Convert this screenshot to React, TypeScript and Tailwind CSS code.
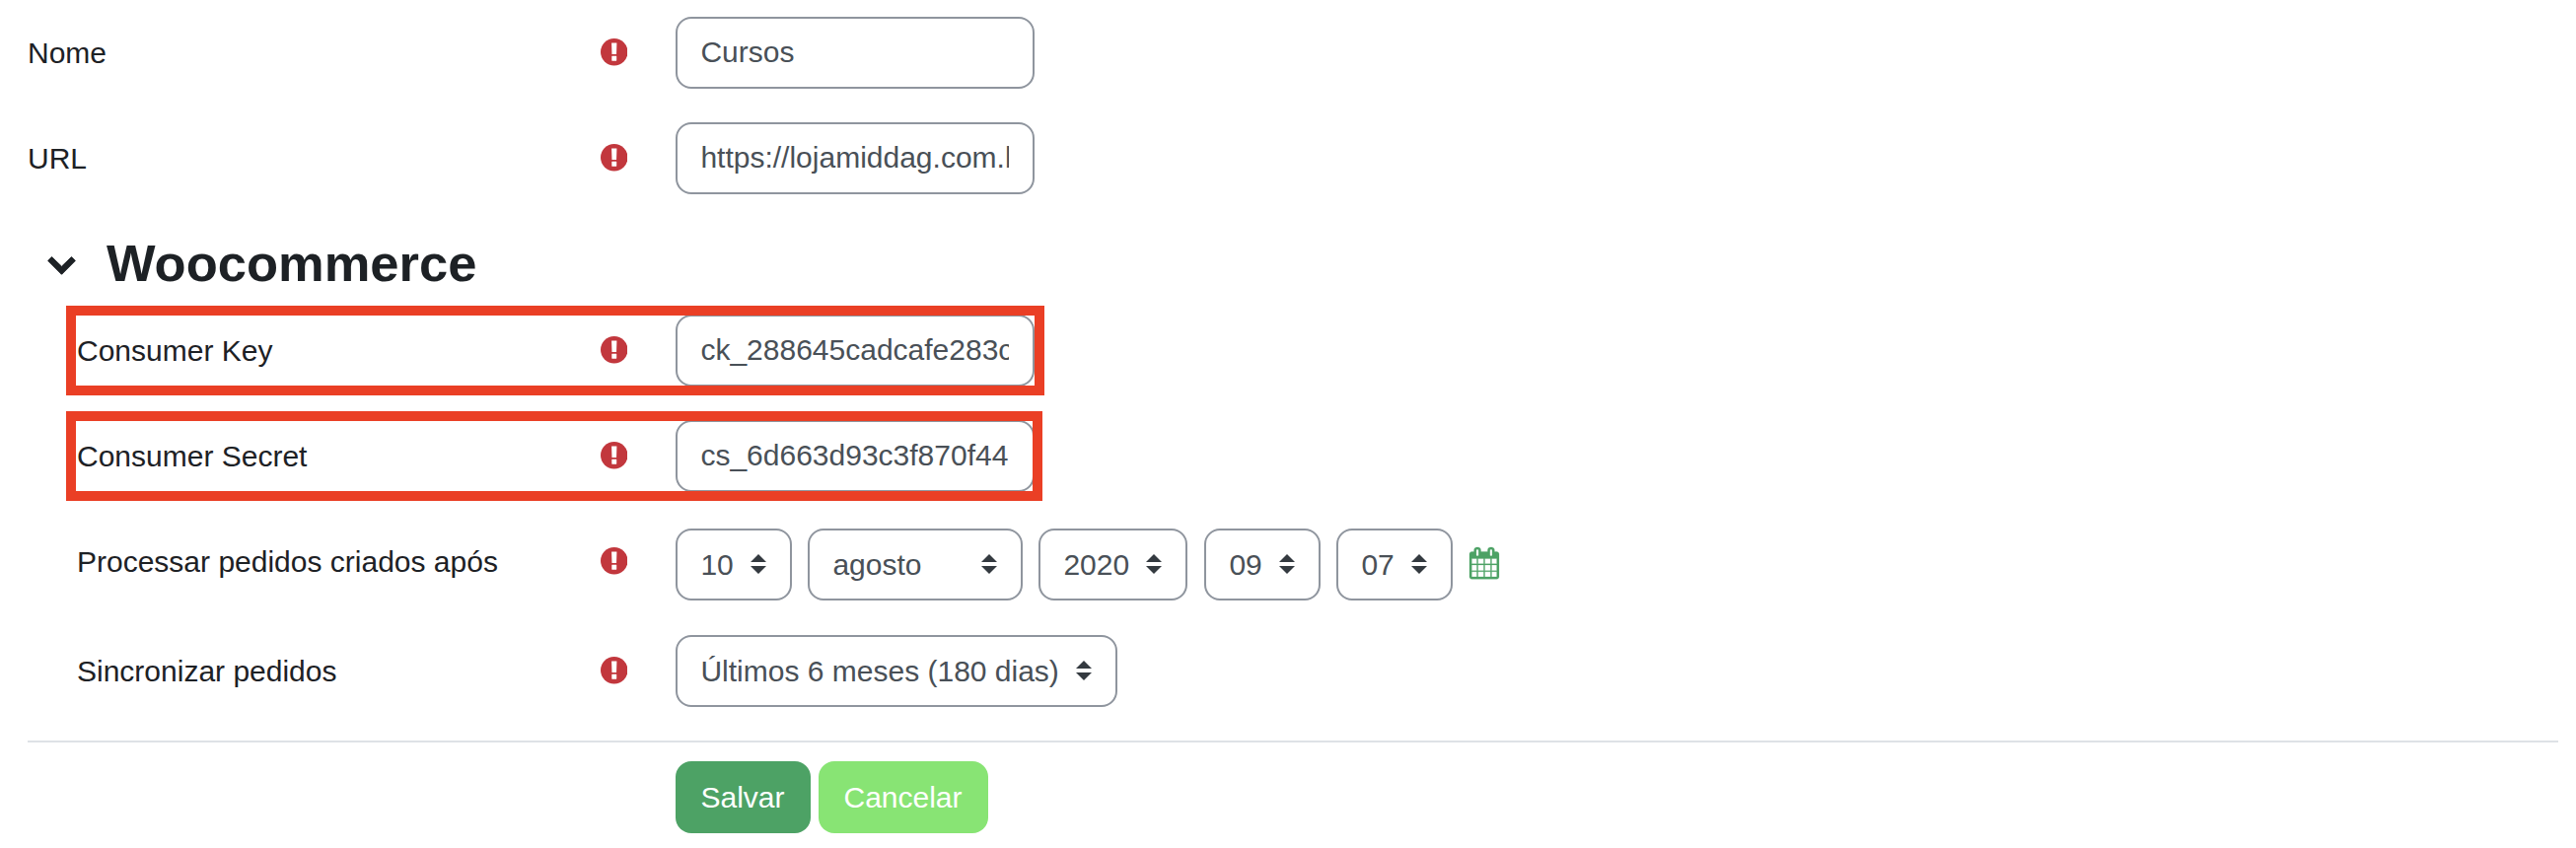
import React from "react";

function RequiredIcon({ className = "" }: { className?: string }) {
  return (
    <svg viewBox="0 0 27.5 27.5" className={`block h-[27.5px] w-[27.5px] shrink-0 ${className}`} aria-label="Obrigatório">
      <circle cx="13.75" cy="13.75" r="13.75" fill="#c2373d" />
      <path d="M11.1 4.500h5.300l-0.350 11.600h-4.600z" fill="#fff" />
      <rect x="11.300" y="17.700" width="4.900" height="5" rx="0.400" fill="#fff" />
    </svg>
  );
}

function CalendarIcon() {
  return (
    <svg viewBox="0 0 1664 1792" className="mt-[19px] ml-[17px] h-[32.3px] w-[30px] shrink-0 overflow-visible" fill="#4da265" stroke="#4da265" strokeWidth="14">
      <path d="M128 1664h288v-288h-288v288zm352 0h320v-288h-320v288zm-352-352h288v-320h-288v320zm352 0h320v-320h-320v320zm-352-384h288v-288h-288v288zm736 736h320v-288h-320v288zm-384-736h320v-288h-320v288zm768 736h288v-288h-288v288zm-384-352h320v-320h-320v320zm-352-864v-288q0-13-9.500-22.500t-22.500-9.500h-64q-13 0-22.500 9.500t-9.500 22.500v288q0 13 9.500 22.500t22.500 9.500h64q13 0 22.500-9.500t9.500-22.500zm736 864h288v-320h-288v320zm-384-384h320v-288h-320v288zm384 0h288v-288h-288v288zm32-480v-288q0-13-9.500-22.500t-22.500-9.500h-64q-13 0-22.500 9.500t-9.500 22.500v288q0 13 9.500 22.500t22.500 9.500h64q13 0 22.500-9.500t9.500-22.500zm384-64v1280q0 52-38 90t-90 38h-1408q-52 0-90-38t-38-90v-1280q0-52 38-90t90-38h128v-96q0-66 47-113t113-47h64q66 0 113 47t47 113v96h384v-96q0-66 47-113t113-47h64q66 0 113 47t47 113v96h128q52 0 90 38t38 90z" />
    </svg>
  );
}

function ChevronIcon() {
  return (
    <svg viewBox="0 0 29 19" className="mt-[22.5px] ml-[19.6px] h-[19px] w-[29px] shrink-0 overflow-visible" fill="#1d2125" stroke="#1d2125" strokeWidth="1" strokeLinejoin="round">
      <path d="M4.500 0.600L14.500 10.200L24.500 0.600L28.300 4.400L14.500 18.300L0.700 4.400Z" />
    </svg>
  );
}

function TextInput({ value, label }: { value: string; label: string }) {
  return (
    <input
      type="text"
      aria-label={label}
      defaultValue={value}
      className="h-[73px] w-[364px] shrink-0 rounded-[16px] border-2 border-[#8f959e] bg-white px-6 pb-[2px] -indent-[0.6px] text-[#495057]"
    />
  );
}

function Select({ value, width }: { value: string; width: string }) {
  return (
    <div className={`flex h-[73px] shrink-0 justify-between rounded-[16px] border-2 border-[#8f959e] px-6 text-[#495057] ${width}`}>
      <span className="pt-[17px] leading-[35px] whitespace-nowrap -indent-[0.6px]">{value}</span>
      <svg viewBox="0 0 4 5" className="mt-6 h-5 w-4 shrink-0" fill="#343a40">
        <path d="M2 0L0 2h4zm0 5L0 3h4z" />
      </svg>
    </div>
  );
}

type RowProps = {
  label: string;
  indent?: boolean;
  labelTop: string;
  iconTop: string;
  children: React.ReactNode;
};

function Row({ label, indent, labelTop, iconTop, children }: RowProps) {
  return (
    <div className={`flex h-[73px] items-start ${indent ? "pl-[78px]" : "pl-7"}`}>
      <div className={`shrink-0 leading-[35px] whitespace-nowrap text-[#1d2125] ${labelTop} ${indent ? "w-[530.5px]" : "w-[580.5px]"}`}>{label}</div>
      <RequiredIcon className={`mr-[49px] ${iconTop}`} />
      {children}
    </div>
  );
}

export default function App() {
  return (
    <main className="h-[860px] w-[2612px] overflow-hidden bg-white pt-[17px] font-['Liberation_Sans',Arial,sans-serif] text-[30px]">
      <Row label="Nome" labelTop="mt-[19px]" iconTop="mt-[22px]">
        <TextInput label="Nome" value="Cursos" />
      </Row>
      <div className="h-[34px]" />
      <Row label="URL" labelTop="mt-[19px]" iconTop="mt-[22px]">
        <TextInput label="URL" value="https://lojamiddag.com.br" />
      </Row>

      <div className="flex h-[122px] items-start pt-10 pl-7">
        <ChevronIcon />
        <h2 className="ml-[31.4px] text-[52.5px] leading-[60px] font-bold text-[#1d2125]">Woocommerce</h2>
      </div>

      <div className="relative">
        <Row label="Consumer Key" indent labelTop="mt-[19px]" iconTop="mt-[22px]">
          <TextInput label="Consumer Key" value="ck_288645cadcafe283c" />
        </Row>
        <div className="pointer-events-none absolute -top-[9px] left-[67px] h-[91px] w-[992px] border-[10px] border-[#ea3f25]" />
      </div>
      <div className="h-[34px]" />
      <div className="relative">
        <Row label="Consumer Secret" indent labelTop="mt-[19px]" iconTop="mt-[22px]">
          <TextInput label="Consumer Secret" value="cs_6d663d93c3f870f44" />
        </Row>
        <div className="pointer-events-none absolute -top-[9px] left-[67px] h-[91px] w-[990px] border-[10px] border-[#ea3f25]" />
      </div>

      <div className="h-[37px]" />
      <Row label="Processar pedidos criados após" indent labelTop="mt-4" iconTop="mt-[19px]">
        <Select value="10" width="w-[118px]" />
        <div className="w-4 shrink-0" />
        <Select value="agosto" width="w-[218px]" />
        <div className="w-4 shrink-0" />
        <Select value="2020" width="w-[151px]" />
        <div className="w-[17px] shrink-0" />
        <Select value="09" width="w-[118px]" />
        <div className="w-4 shrink-0" />
        <Select value="07" width="w-[118px]" />
        <CalendarIcon />
      </Row>
      <div className="h-[35px]" />
      <Row label="Sincronizar pedidos" indent labelTop="mt-[19px]" iconTop="mt-[22px]">
        <Select value="Últimos 6 meses (180 dias)" width="w-[448px]" />
      </Row>

      <div className="mt-[34px] mr-[18px] ml-7 h-0.5 bg-[#dee2e6]" />
      <div className="mt-[19px] ml-[685px] flex gap-2 text-white">
        <button className="h-[73px] w-[137px] rounded-[16px] bg-[#4da265] pr-px leading-[35px]">Salvar</button>
        <button className="h-[73px] w-[172px] rounded-[16px] bg-[#88e474] pr-px leading-[35px]">Cancelar</button>
      </div>
    </main>
  );
}
